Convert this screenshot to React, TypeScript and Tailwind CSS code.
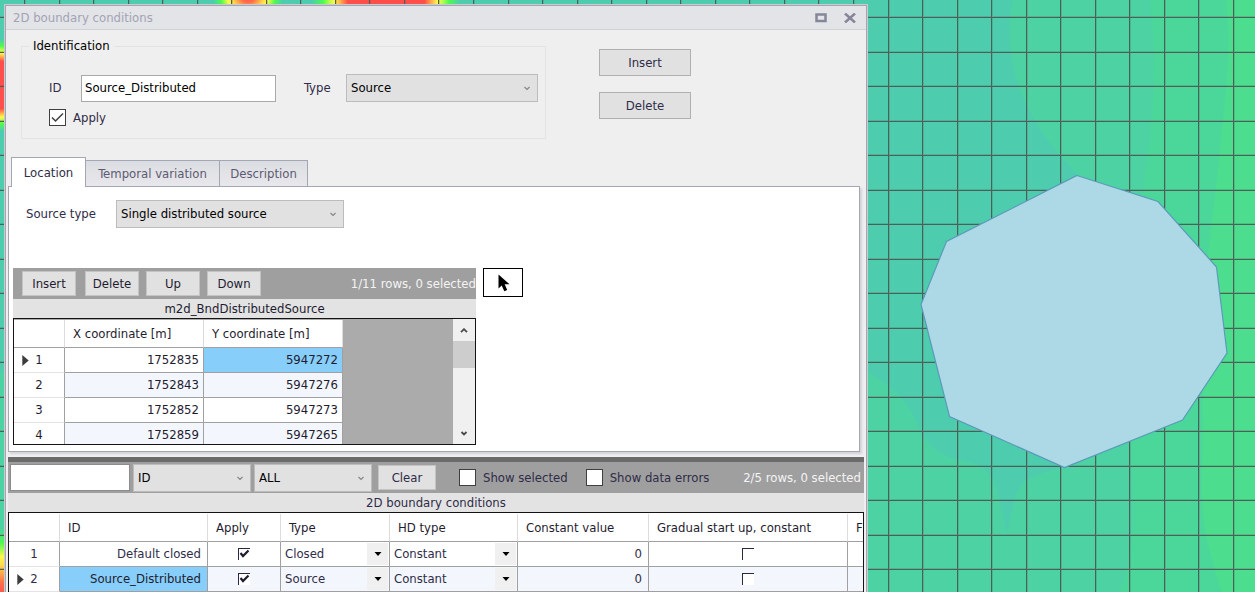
import type { ReactNode } from "react";

const X_LINES = Array.from({ length: 60 }, (_, i) => Math.round(24 + i * 34.54));
const Y_LINES = Array.from({ length: 40 }, (_, i) => Math.round(17 + i * 34.5));

const points = [
  { x: 1752835, y: 5947272 },
  { x: 1752843, y: 5947276 },
  { x: 1752852, y: 5947273 },
  { x: 1752859, y: 5947265 },
];

const boundaries = [
  { id: "Default closed", type: "Closed", hd: "Constant", value: 0 },
  { id: "Source_Distributed", type: "Source", hd: "Constant", value: 0 },
];

function MapCanvas() {
  return (
    <svg className="absolute inset-0 h-full w-full bg-[#4dd2a4]" aria-hidden="true">
      <defs>
        <radialGradient id="hot">
          <stop offset="0" stopColor="#ff4f4a" />
          <stop offset="0.52" stopColor="#ff4f4a" />
          <stop offset="0.62" stopColor="#ffb24a" />
          <stop offset="0.7" stopColor="#fdf94c" />
          <stop offset="0.78" stopColor="#a8fb4c" />
          <stop offset="0.85" stopColor="#4dfa50" />
          <stop offset="1" stopColor="#4dfa50" stopOpacity="0" />
        </radialGradient>
        <radialGradient id="warm">
          <stop offset="0" stopColor="#ff4f4a" />
          <stop offset="0.2" stopColor="#ff6f4a" />
          <stop offset="0.45" stopColor="#fdd94c" />
          <stop offset="0.58" stopColor="#fdf94c" />
          <stop offset="0.78" stopColor="#4dfa50" />
          <stop offset="1" stopColor="#4dfa50" stopOpacity="0" />
        </radialGradient>
      </defs>
      <path
        d="M0 0H1013C1008 20 1008 50 1015 75C1023 105 1045 143 1080 177L1100 300L1064 468C1045 470 1025 478 1019 488C1012 500 1012 515 1007 532C1001 515 1001 495 993 480C985 466 975 463 960 460C935 455 925 440 918 427C912 410 905 395 868 372L0 372Z"
        fill="#4dcdad"
      />
      <path
        d="M1150 0C1156 60 1156 100 1143 190L1130 440C1136 520 1134 560 1120 592V2000H4000V0Z"
        fill="#4cd79a"
      />
      <path
        d="M1226 0C1233 60 1222 120 1218 170L1205 280L1202 470C1200 530 1212 560 1222 592V2000H4000V0Z"
        fill="#4ddd8e"
      />
      <ellipse cx="248" cy="-3" rx="35" ry="28" fill="url(#warm)" />
      <ellipse cx="386" cy="0" rx="74" ry="50" fill="url(#hot)" />
      <ellipse cx="0" cy="85" rx="30" ry="46" fill="url(#hot)" />
      <ellipse cx="2" cy="596" rx="40" ry="68" fill="url(#warm)" />
      <g stroke="#4e5f59" strokeWidth="1">
        {X_LINES.map((x) => (
          <path key={x} d={`M${x}.5 0V2000`} />
        ))}
        {Y_LINES.map((y) => (
          <path key={y} d={`M0 ${y}.5H4000`} />
        ))}
      </g>
      <g stroke="#4e5f59" strokeWidth="1" opacity="0.25">
        {X_LINES.map((x) => (
          <path key={x} d={`M${x + 1}.5 0V2000`} />
        ))}
        {Y_LINES.map((y) => (
          <path key={y} d={`M0 ${y - 1}.5H4000`} />
        ))}
      </g>
      <path
        d="M1077 175.500L1158 201.500L1216.500 267L1227 353L1182.500 420L1064.500 467.500L949.500 416.500L921 304.500L946.500 241.500Z"
        fill="#add8e6"
        stroke="#5b9bb9"
        strokeWidth="1.2"
      />
    </svg>
  );
}

function Chevron({ up = false, dark = false }: { up?: boolean; dark?: boolean }) {
  return (
    <svg
      viewBox="0 0 8 5"
      className="pointer-events-none h-[5px] w-2"
      fill="none"
      stroke={dark ? "#4a4a4a" : "#858585"}
      strokeWidth={dark ? 1.8 : 1.2}
    >
      <path d={up ? "M1 4.200L4 1.200L7 4.200" : "M1.500 1L4 3.500L6.500 1"} />
    </svg>
  );
}

function Dropdown({ id, label, value, className }: { id: string; label?: string; value: string; className: string }) {
  return (
    <div className={`relative h-7 shrink-0 ${className}`}>
      <select
        id={id}
        aria-label={label}
        defaultValue={value}
        className="h-full w-full appearance-none border border-[#bcbcbc] bg-[#e1e1e1] px-1 text-black outline-none"
      >
        <option>{value}</option>
      </select>
      <span className="pointer-events-none absolute top-3 right-[7px]">
        <Chevron />
      </span>
    </div>
  );
}

function PushButton({ children, className }: { children: ReactNode; className: string }) {
  return (
    <button type="button" className={`shrink-0 border bg-[#e1e1e1] text-center ${className}`}>
      {children}
    </button>
  );
}

function CheckOption({ label, checked = false }: { label: string; checked?: boolean }) {
  return (
    <label className="flex shrink-0 items-center gap-[7px] whitespace-nowrap text-[#2f2c48]">
      <span className="relative size-[17px]">
        <input
          type="checkbox"
          defaultChecked={checked}
          className="peer block size-full appearance-none border border-[#3f3f3f] bg-white"
        />
        <svg
          viewBox="0 0 17 17"
          className="pointer-events-none absolute inset-0 hidden peer-checked:block"
          fill="none"
          stroke="#3f3f3f"
          strokeWidth="1.5"
        >
          <path d="M3 8.500L6.500 12L14 4.500" />
        </svg>
      </span>
      {label}
    </label>
  );
}

// sunken box used inside table cells: only the top and left edges are dark
function CellCheck({ label, checked = false }: { label: string; checked?: boolean }) {
  return (
    <span className="relative mx-auto block size-3">
      <input
        type="checkbox"
        aria-label={label}
        defaultChecked={checked}
        className="peer block size-full appearance-none border-t border-l border-[#2b2840] bg-white"
      />
      <svg
        viewBox="0 0 12 12"
        className="pointer-events-none absolute inset-0 hidden peer-checked:block"
        fill="none"
        stroke="#1f1c30"
        strokeWidth="2.2"
      >
        <path d="M2.500 5L5 8L10.500 2.500" />
      </svg>
    </span>
  );
}

function CellSelect({ label, value }: { label: string; value: string }) {
  return (
    <div className="relative flex h-[22px] items-center">
      <select
        aria-label={label}
        defaultValue={value}
        className="h-full w-full appearance-none bg-transparent pl-1 outline-none"
      >
        <option>{value}</option>
      </select>
      <span className="pointer-events-none absolute top-0 right-[1px] flex h-[22px] w-[21px] items-center justify-center bg-[#f0f0f0]">
        <svg viewBox="0 0 8 4" className="h-1 w-2" fill="#000">
          <path d="M0.500 0H7.500L4 4Z" />
        </svg>
      </span>
    </div>
  );
}

function RowMark({ n, current }: { n: number; current: boolean }) {
  return (
    <th scope="row" className="relative border-r border-b border-r-[#a0a0a0] border-b-[#e3e3e3] bg-white text-center font-normal">
      {current && (
        <svg viewBox="0 0 7 12" className="absolute top-[7px] left-2 h-[11px] w-[7px]" fill="#3c3c3c">
          <path d="M0 0L7 6L0 12Z" />
        </svg>
      )}
      {n}
    </th>
  );
}

const headCell = "h-7 border-r border-b border-r-[#dcdcdc] border-b-[#a0a0a0] bg-white px-2 text-left font-normal whitespace-nowrap";
const cell = "border-r border-b border-[#a0a0a0]";

function PointTable() {
  return (
    <div className="flex h-[127px] border border-[#141414] bg-[#ababab]">
      <div className="min-w-0 flex-1 overflow-hidden pt-[1px]">
        <table className="w-[329px] table-fixed border-separate border-spacing-0 text-[#1f1c30]">
          <colgroup>
            <col className="w-[51px]" />
            <col className="w-[139px]" />
            <col className="w-[139px]" />
          </colgroup>
          <thead>
            <tr>
              <td className={headCell} />
              <th className={headCell}>X coordinate [m]</th>
              <th className={headCell}>Y coordinate [m]</th>
            </tr>
          </thead>
          <tbody>
            {points.map((p, i) => (
              <tr key={p.x} className={i % 2 ? "h-[25px] bg-[#f3f7fd]" : "h-[25px] bg-white"}>
                <RowMark n={i + 1} current={i === 0} />
                <td className={`${cell} pr-1 text-right`}>{p.x}</td>
                <td className={i === 0 ? `${cell} bg-[#87cefa] pr-1 text-right` : `${cell} pr-1 text-right`}>{p.y}</td>
              </tr>
            ))}
          </tbody>
        </table>
      </div>
      <div className="flex w-[22px] flex-col items-center bg-[#f0f0f0]">
        <button type="button" aria-label="Scroll up" className="flex h-[22px] w-full items-center justify-center">
          <Chevron up dark />
        </button>
        <div className="h-[27px] w-full bg-[#cdcdcd]" />
        <button type="button" aria-label="Scroll down" className="mt-auto flex h-[22px] w-full items-center justify-center">
          <Chevron dark />
        </button>
      </div>
    </div>
  );
}

function LocationPanel() {
  return (
    <section className="mr-1.5 ml-0.5 h-[266px] border border-[#a3a6b4] bg-white pt-[13px] pl-1 shadow-[2px_2px_2px_#d4d4d8]">
      <div className="flex items-center pl-[13px]">
        <label htmlFor="sourceType" className="w-[90px] text-[#2f2c48]">
          Source type
        </label>
        <Dropdown id="sourceType" value="Single distributed source" className="w-[228px]" />
      </div>
      <div className="mt-10 flex items-start gap-[7px]">
        <div className="w-[463px]">
          <div className="flex h-[31px] items-center overflow-hidden bg-[#9f9f9f] pl-[9px] text-[#1f1c30]">
            <PushButton className="mr-[9px] h-[25px] w-[54px] border-[#c4c4c4]">Insert</PushButton>
            <PushButton className="mr-[7px] h-[25px] w-[54px] border-[#c4c4c4]">Delete</PushButton>
            <PushButton className="mr-[7px] h-[25px] w-[54px] border-[#c4c4c4]">Up</PushButton>
            <PushButton className="h-[25px] w-[54px] border-[#c4c4c4]">Down</PushButton>
            <span className="ml-auto whitespace-nowrap text-[#f4f4f4]">1/11 rows, 0 selected</span>
          </div>
          <p className="h-[19px] bg-[#e3e3e3] text-center leading-5 text-[#1f1c30]">m2d_BndDistributedSource</p>
          <PointTable />
        </div>
        <button
          type="button"
          aria-label="Pick from map"
          className="flex h-[29px] w-10 items-center justify-center border border-black bg-white pl-0.5"
        >
          <svg viewBox="0 0 12 18" className="h-[18px] w-3" fill="#000">
            <path d="M0.500 0.500V14.500L3.700 11.400L6.300 17.200L9.200 16L6.700 10.300H11.500Z" />
          </svg>
        </button>
      </div>
    </section>
  );
}

function BoundaryTable() {
  return (
    <div className="overflow-hidden border border-b-0 border-[#141414] bg-white pt-[1px]">
      <table className="w-full min-w-[1000px] table-fixed border-separate border-spacing-0 text-[#2f2c48]">
        <colgroup>
          <col className="w-[51px]" />
          <col className="w-[148px]" />
          <col className="w-[73px]" />
          <col className="w-[109px]" />
          <col className="w-[128px]" />
          <col className="w-[131px]" />
          <col className="w-[199px]" />
          <col />
        </colgroup>
        <thead className="text-[#1f1c30]">
          <tr>
            <td className={headCell} />
            <th className={headCell}>ID</th>
            <th className={headCell}>Apply</th>
            <th className={headCell}>Type</th>
            <th className={headCell}>HD type</th>
            <th className={headCell}>Constant value</th>
            <th className={headCell}>Gradual start up, constant</th>
            <th className={headCell}>F</th>
          </tr>
        </thead>
        <tbody>
          {boundaries.map((b, i) => (
            <tr key={b.id} className={i % 2 ? "h-[25px] bg-[#f3f7fd]" : "h-[25px] bg-white"}>
              <RowMark n={i + 1} current={i === 1} />
              <td className={i === 1 ? `${cell} bg-[#87cefa] pr-1.5 text-right text-[#1f1c30]` : `${cell} pr-1.5 text-right`}>
                {b.id}
              </td>
              <td className={cell}>
                <CellCheck label={`Apply ${b.id}`} checked />
              </td>
              <td className={cell}>
                <CellSelect label={`Type of ${b.id}`} value={b.type} />
              </td>
              <td className={cell}>
                <CellSelect label={`HD type of ${b.id}`} value={b.hd} />
              </td>
              <td className={`${cell} pr-1.5 text-right`}>{b.value}</td>
              <td className={cell}>
                <CellCheck label={`Gradual start up of ${b.id}`} />
              </td>
              <td className={cell} />
            </tr>
          ))}
        </tbody>
      </table>
    </div>
  );
}

export default function App() {
  return (
    <main className="relative h-screen overflow-hidden font-['DejaVu_Sans_Condensed','DejaVu_Sans',sans-serif] text-[13px] leading-4">
      <MapCanvas />
      <div className="relative mt-1 mr-[387px] ml-1 flex h-full flex-col border border-[#c9cbd0] bg-[#efefef]">
        <div className="flex flex-1 flex-col border border-[#a3a5b1]">
          <header className="flex h-6 shrink-0 items-center border-b border-[#d0d2d8] bg-[#e3e4e8] pr-2.5 pl-[7px] text-[#a2a3b3]">
            <h1>2D boundary conditions</h1>
            <button type="button" aria-label="Maximize" className="mr-[17px] ml-auto">
              <svg viewBox="0 0 12 10" className="h-2.5 w-3" fill="none" stroke="#85869a" strokeWidth="2.500">
                <path d="M1.500 1.500H10.500V8H1.500Z" />
              </svg>
            </button>
            <button type="button" aria-label="Close">
              <svg viewBox="0 0 12 10" className="h-2.5 w-3" fill="none" stroke="#85869a" strokeWidth="2.500">
                <path d="M1 0.500L11 9.500M11 0.500L1 9.500" />
              </svg>
            </button>
          </header>

          <div className="flex pt-2 pl-[15px]">
            <fieldset className="h-[101px] w-[525px] border border-[#e3e3e3] pl-[27px]">
              <legend className="-ml-5 px-1 text-black">Identification</legend>
              <div className="mt-5 flex items-center text-[#2f2c48]">
                <label htmlFor="boundaryId" className="w-8">
                  ID
                </label>
                <input
                  id="boundaryId"
                  defaultValue="Source_Distributed"
                  className="h-[27px] w-[195px] border border-[#a9a9a9] bg-white px-[3px] pb-0.5 text-black outline-none"
                />
                <label htmlFor="boundaryType" className="ml-7 w-[42px]">
                  Type
                </label>
                <Dropdown id="boundaryType" value="Source" className="w-48" />
              </div>
              <div className="mt-[7px] flex">
                <CheckOption label="Apply" checked />
              </div>
            </fieldset>
            <div className="mt-[11px] ml-[53px] flex flex-col gap-4 text-[#2f2c48]">
              <PushButton className="h-[27px] w-[92px] border-[#b0b0b0]">Insert</PushButton>
              <PushButton className="h-[27px] w-[92px] border-[#b0b0b0]">Delete</PushButton>
            </div>
          </div>

          <div role="tablist" className="relative z-10 mt-[18px] -mb-px flex items-end pl-[5px] text-[#5d5b72]">
            <button
              type="button"
              role="tab"
              aria-selected="true"
              className="h-[30px] w-[75px] border border-b-0 border-[#a3a6b4] bg-white text-[#2f2c48]"
            >
              Location
            </button>
            <button
              type="button"
              role="tab"
              aria-selected="false"
              className="h-[27px] w-[134px] border border-l-0 border-[#a3a6b4] bg-linear-to-b from-[#dcdde2] to-[#e8e8ec]"
            >
              Temporal variation
            </button>
            <button
              type="button"
              role="tab"
              aria-selected="false"
              className="h-[27px] w-[88px] border border-l-0 border-[#a3a6b4] bg-linear-to-b from-[#dcdde2] to-[#e8e8ec]"
            >
              Description
            </button>
          </div>
          <LocationPanel />

          <div className="mt-[5px] mr-0.5 ml-0.5">
            <div className="h-[5px] bg-[#6b6b6b]" />
            <div className="flex h-[31px] items-center overflow-hidden bg-[#9f9f9f] pr-[3px] pl-0.5">
              <input
                aria-label="Filter text"
                className="mr-[3px] h-[27px] w-[120px] shrink-0 border border-[#8c8c8c] bg-white px-1 outline-none"
              />
              <Dropdown id="filterColumn" label="Filter column" value="ID" className="mr-[3px] w-[118px]" />
              <Dropdown id="filterScope" label="Filter scope" value="ALL" className="mr-1.5 w-[118px]" />
              <PushButton className="mr-[23px] h-[25px] w-[58px] border-[#c4c4c4] text-[#2f2c48]">Clear</PushButton>
              <CheckOption label="Show selected" />
              <div className="w-[18px]" />
              <CheckOption label="Show data errors" />
              <span className="ml-auto whitespace-nowrap text-[#f4f4f4]">2/5 rows, 0 selected</span>
            </div>
            <p className="h-[19px] bg-[#e3e3e3] text-center leading-5 text-[#2f2c48]">2D boundary conditions</p>
            <BoundaryTable />
          </div>
        </div>
      </div>
    </main>
  );
}
